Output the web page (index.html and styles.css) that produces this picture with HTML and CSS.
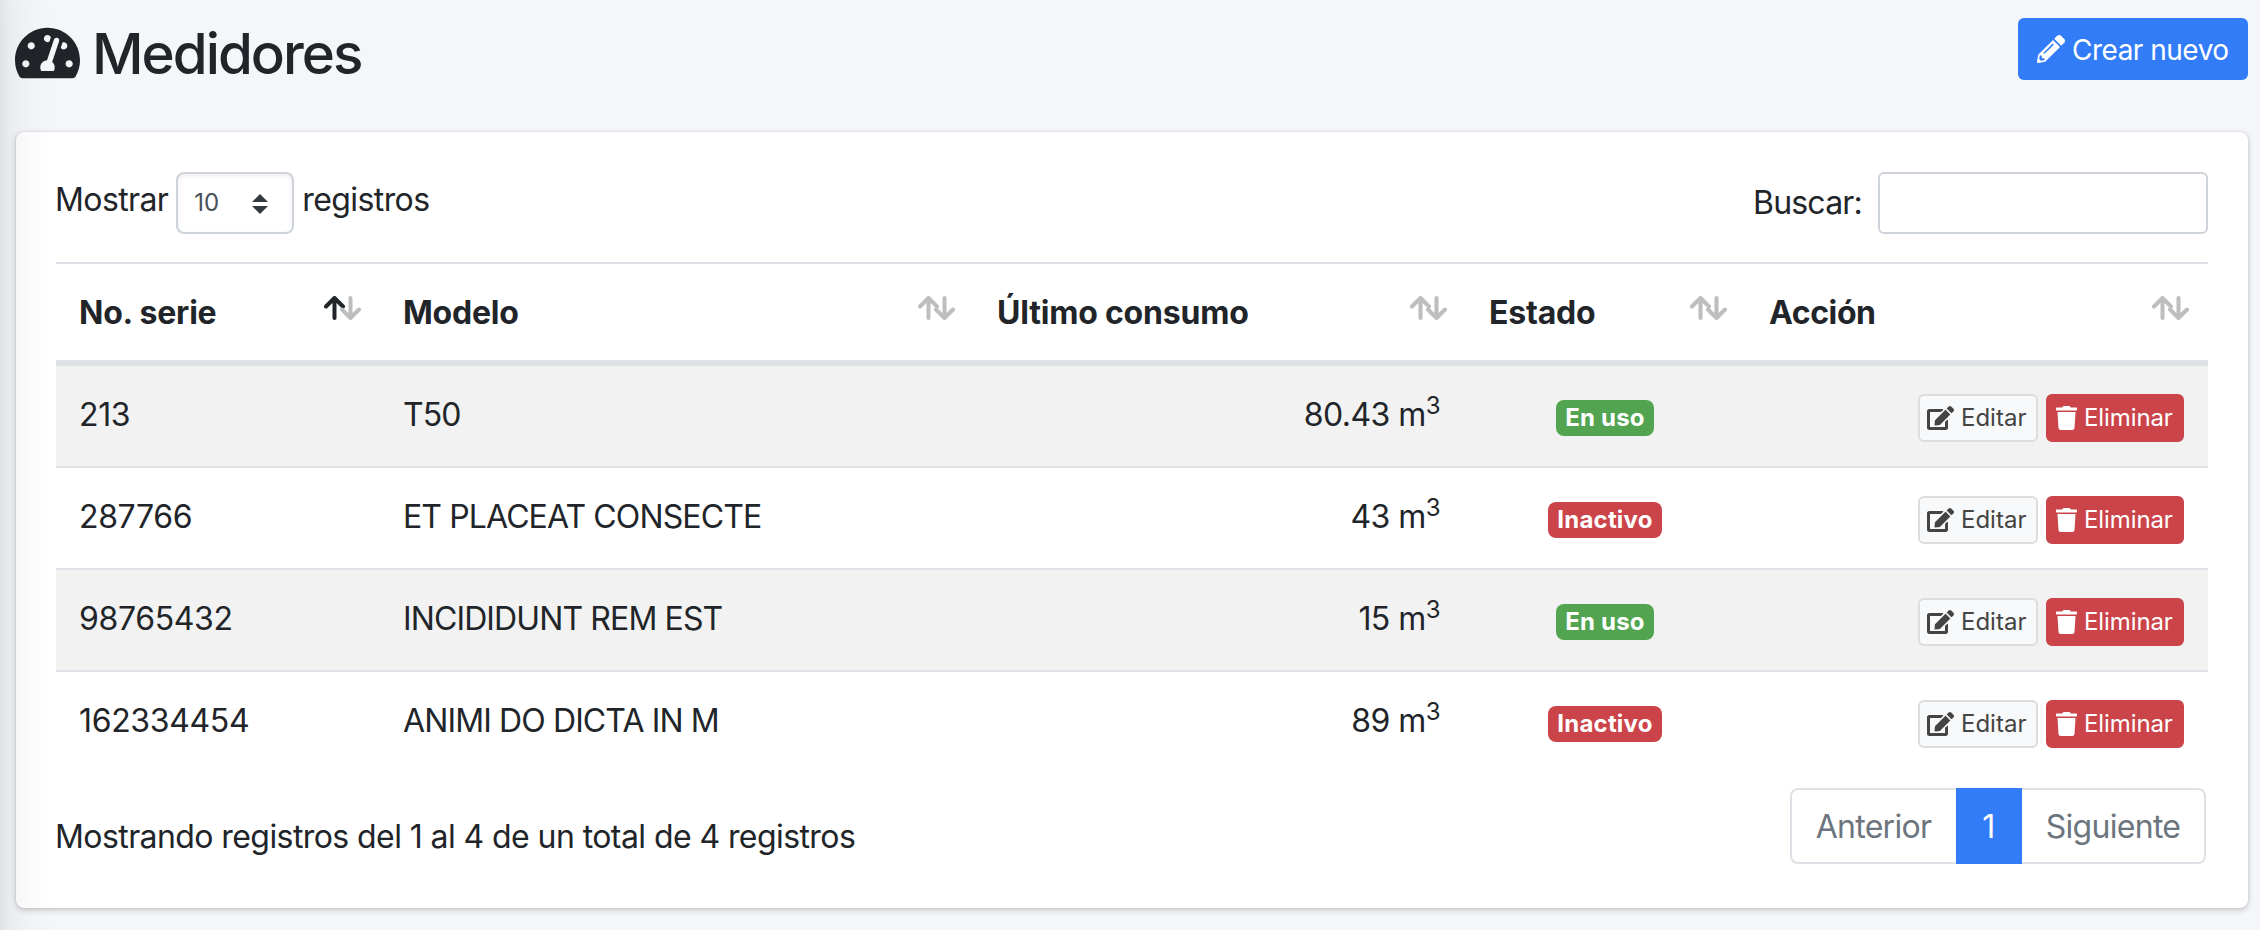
FILE: index.html
```html
<!DOCTYPE html>
<html lang="es">
<head>
<meta charset="utf-8">
<title>Medidores</title>
<link rel="stylesheet" href="styles.css">
</head>
<body>
<svg class="sprite" aria-hidden="true">
  <symbol id="i-gauge" viewBox="0 0 576 512"><path d="M288 32C128.94 32 0 160.94 0 320c0 52.8 14.25 102.26 39.06 144.8 5.61 9.62 16.3 15.2 27.44 15.2h443c11.14 0 21.83-5.58 27.44-15.2C561.75 422.26 576 372.8 576 320c0-159.06-128.94-288-288-288zm0 64c14.71 0 26.58 10.13 30.32 23.65-1.11 2.26-2.64 4.23-3.45 6.67l-9.22 27.67c-5.13 3.49-10.97 6.01-17.64 6.01-17.67 0-32-14.33-32-32S270.33 96 288 96zM96 384c-17.67 0-32-14.33-32-32s14.33-32 32-32 32 14.33 32 32-14.33 32-32 32zm48-160c-17.67 0-32-14.33-32-32s14.33-32 32-32 32 14.33 32 32-14.33 32-32 32zm246.77-72.41l-61.33 184C343.13 347.33 352 364.54 352 384c0 11.72-3.38 22.55-8.88 32H232.88c-5.5-9.45-8.88-20.28-8.88-32 0-33.94 26.5-61.43 59.9-63.59l61.34-184.01c4.17-12.56 17.73-19.45 30.36-15.17 12.57 4.19 19.35 17.79 15.17 30.36zm14.66 57.2l15.52-46.55c3.47-1.29 7.13-2.23 11.05-2.23 17.67 0 32 14.33 32 32s-14.33 32-32 32c-11.38-.01-20.89-6.28-26.57-15.22zM480 384c-17.67 0-32-14.33-32-32s14.33-32 32-32 32 14.33 32 32-14.33 32-32 32z"/></symbol>
  <symbol id="i-pencil" viewBox="0 0 512 512"><path d="M497.9 142.1l-46.1 46.1c-4.7 4.7-12.3 4.7-17 0l-111-111c-4.7-4.7-4.7-12.3 0-17l46.1-46.1c18.7-18.7 49.1-18.7 67.9 0l60.1 60.1c18.8 18.7 18.8 49.1 0 67.9zM284.2 99.8L21.6 362.4.4 483.9c-2.9 16.4 11.4 30.6 27.8 27.8l121.5-21.3 262.6-262.6c4.7-4.7 4.7-12.3 0-17l-111-111c-4.8-4.7-12.4-4.7-17.1 0zM124.1 339.9c-5.5-5.5-5.5-14.3 0-19.8l154-154c5.5-5.5 14.3-5.5 19.8 0s5.5 14.3 0 19.8l-154 154c-5.5 5.5-14.3 5.5-19.8 0zM88 424h48v36.3l-64.5 11.3-31.1-31.1L51.7 376H88v48z"/></symbol>
  <symbol id="i-edit" viewBox="0 0 576 512"><path d="M402.6 83.2l90.2 90.2c3.8 3.8 3.8 10 0 13.8L274.4 405.6l-92.8 10.3c-12.4 1.4-22.9-9.1-21.5-21.5l10.3-92.8L388.8 83.2c3.8-3.8 10-3.8 13.8 0zm162-22.9l-48.8-48.8c-15.2-15.2-39.9-15.2-55.2 0l-35.4 35.4c-3.8 3.8-3.8 10 0 13.8l90.2 90.2c3.8 3.8 10 3.8 13.8 0l35.4-35.4c15.2-15.3 15.2-40 0-55.2zM384 346.2V448H64V128h229.8c3.2 0 6.2-1.3 8.5-3.5l40-40c7.6-7.6 2.2-20.5-8.5-20.5H48C21.5 64 0 85.5 0 112v352c0 26.5 21.5 48 48 48h352c26.5 0 48-21.5 48-48V306.2c0-10.7-12.9-16-20.5-8.5l-40 40c-2.2 2.3-3.5 5.3-3.5 8.5z"/></symbol>
  <symbol id="i-trash" viewBox="0 0 448 512"><path d="M432 32H312l-9.4-18.7A24 24 0 0 0 281.1 0H166.8a23.72 23.72 0 0 0-21.4 13.3L136 32H16A16 16 0 0 0 0 48v32a16 16 0 0 0 16 16h416a16 16 0 0 0 16-16V48a16 16 0 0 0-16-16zM53.2 467a48 48 0 0 0 47.9 45h245.8a48 48 0 0 0 47.9-45L416 128H32z"/></symbol>
  <symbol id="i-sort" viewBox="0 0 37 24">
    <path class="up" d="M2 10.5 10.5 2 19 10.5M10.5 2V22"/>
    <path class="down" d="M18 13.5 26.5 22 35 13.5M26.5 22V2"/>
  </symbol>
</svg>
<div class="sidebar"></div>

<header class="page-head">
  <h1 class="title"><svg class="title-icon"><use href="#i-gauge"/></svg><span>Medidores</span></h1>
  <button class="btn-new"><svg class="new-icon"><use href="#i-pencil"/></svg><span>Crear nuevo</span></button>
</header>

<main class="card">
  <div class="controls">
    <label class="length"><span>Mostrar</span>
      <span class="select">10<svg class="caret" viewBox="0 0 16 20"><path d="M0 8 8 0l8 8zM0 12h16l-8 8z"/></svg></span>
      <span>registros</span></label>
    <label class="search"><span>Buscar:</span><input class="search-input" type="text"></label>
  </div>

  <table class="grid">
    <colgroup><col class="c1"><col class="c2"><col class="c3"><col class="c4"><col class="c5"></colgroup>
    <thead>
      <tr>
        <th><div class="th"><span>No. serie</span><svg class="sort asc"><use href="#i-sort"/></svg></div></th>
        <th><div class="th"><span>Modelo</span><svg class="sort"><use href="#i-sort"/></svg></div></th>
        <th><div class="th"><span>Último consumo</span><svg class="sort"><use href="#i-sort"/></svg></div></th>
        <th><div class="th"><span>Estado</span><svg class="sort"><use href="#i-sort"/></svg></div></th>
        <th><div class="th"><span>Acción</span><svg class="sort"><use href="#i-sort"/></svg></div></th>
      </tr>
    </thead>
    <tbody>
      <tr>
        <td class="serial">213</td><td class="model">T50</td><td class="num">80.43 m<sup>3</sup></td>
        <td class="state"><span class="badge ok">En uso</span></td>
        <td><div class="actions"><button class="btn edit"><svg class="edit-icon"><use href="#i-edit"/></svg>Editar</button><button class="btn del"><svg class="del-icon"><use href="#i-trash"/></svg>Eliminar</button></div></td>
      </tr>
      <tr>
        <td class="serial">287766</td><td class="model">ET PLACEAT CONSECTE</td><td class="num">43 m<sup>3</sup></td>
        <td class="state"><span class="badge off">Inactivo</span></td>
        <td><div class="actions"><button class="btn edit"><svg class="edit-icon"><use href="#i-edit"/></svg>Editar</button><button class="btn del"><svg class="del-icon"><use href="#i-trash"/></svg>Eliminar</button></div></td>
      </tr>
      <tr>
        <td class="serial">98765432</td><td class="model">INCIDIDUNT REM EST</td><td class="num">15 m<sup>3</sup></td>
        <td class="state"><span class="badge ok">En uso</span></td>
        <td><div class="actions"><button class="btn edit"><svg class="edit-icon"><use href="#i-edit"/></svg>Editar</button><button class="btn del"><svg class="del-icon"><use href="#i-trash"/></svg>Eliminar</button></div></td>
      </tr>
      <tr>
        <td class="serial">162334454</td><td class="model">ANIMI DO DICTA IN M</td><td class="num">89 m<sup>3</sup></td>
        <td class="state"><span class="badge off">Inactivo</span></td>
        <td><div class="actions"><button class="btn edit"><svg class="edit-icon"><use href="#i-edit"/></svg>Editar</button><button class="btn del"><svg class="del-icon"><use href="#i-trash"/></svg>Eliminar</button></div></td>
      </tr>
    </tbody>
  </table>

  <footer class="foot">
    <span class="info">Mostrando registros del 1 al 4 de un total de 4 registros</span>
    <nav class="pager"><span class="page prev">Anterior</span><span class="page current">1</span><span class="page next">Siguiente</span></nav>
  </footer>
</main>
</body>
</html>
```
FILE: styles.css
```css
* { box-sizing: border-box; }
html, body { height: 100%; }
body {
  margin: 0;
  padding: 0 12px 0 16px;
  overflow: hidden;
  background: #f4f6f9;
  color: #212529;
  font: 400 32px/48px Inter, "Liberation Sans", sans-serif;
  letter-spacing: -0.5px;
}
button, input { font: inherit; color: inherit; letter-spacing: inherit; margin: 0; }
.sprite { position: absolute; width: 0; height: 0; }
svg { fill: currentColor; flex: none; }

/* Off-canvas side menu: only its shadow reaches the page */
.sidebar {
  position: fixed;
  z-index: 5;
  top: -60px;
  bottom: -60px;
  left: -506px;
  width: 500px;
  box-shadow: 0 28px 56px rgba(0,0,0,.14), 0 20px 20px rgba(0,0,0,.1);
  pointer-events: none;
}

.page-head { display: flex; justify-content: space-between; align-items: flex-start; height: 132px; padding-top: 18px; }
.title { display: flex; align-items: flex-start; margin: 0; font-size: 56.5px; line-height: 70px; font-weight: 550; letter-spacing: -2px; }
.title span { padding-top: 1px; }
.title-icon { width: 65px; height: 58px; margin: 6px 12px 0 -1px; }
.btn-new {
  display: flex; align-items: center; height: 62px; padding: 0 19px; width: 230px;
  border: 0; border-radius: 6px; background: #327cf7; color: #fff;
  font-size: 28px; letter-spacing: -0.5px; white-space: nowrap;
}
.btn-new span { padding-top: 2px; }
.new-icon { width: 28px; height: 28px; margin-right: 7px; }

.card {
  height: 776px; padding: 40px; border-radius: 8px; background: #fff;
  box-shadow: 0 0 2px rgba(0,0,0,.125), 0 2px 6px rgba(0,0,0,.2);
}
.controls { display: flex; justify-content: space-between; height: 90px; }
.length { display: flex; gap: 8px; align-items: flex-start; margin-left: -1px; line-height: 56px; letter-spacing: -0.6px; }
.select {
  display: flex; align-items: center; justify-content: space-between; width: 118px; height: 62px;
  padding: 0 24px 0 16px; border: 2px solid #ced4da; border-radius: 8px;
  box-shadow: inset 0 2px 4px rgba(0,0,0,.075); color: #495057; font-size: 24px; line-height: 60px; letter-spacing: 0;
}
.caret { width: 16px; height: 20px; margin-top: 2px; color: #343a40; }
.search { display: flex; align-items: center; gap: 16px; height: 62px; letter-spacing: -0.8px; }
.search-input { width: 330px; height: 62px; border: 2px solid #ced4da; border-radius: 6px; background: #fff; }

.grid { width: 2152px; table-layout: fixed; border-collapse: separate; border-spacing: 0; }
.c1 { width: 323px; } .c2 { width: 594px; } .c3 { width: 492px; } .c4 { width: 280px; } .c5 { width: 463px; }
th { padding: 25px 18px 23px 24px; border-top: 2px solid #dee2e6; border-bottom: 4px solid #dee2e6; text-align: left; font-weight: 700; letter-spacing: -0.2px; }
th:first-child { padding-left: 23px; }
th:last-child { padding-right: 19px; letter-spacing: -0.4px; }
.th { display: flex; justify-content: space-between; height: 48px; }
.sort { width: 37px; height: 24px; margin-top: 7px; fill: none; stroke: #bdbebf; stroke-width: 4; stroke-linecap: round; stroke-linejoin: round; }
.sort.asc { --up: #212529; }
.up { stroke: var(--up, #bdbebf); }
td { height: 102px; padding: 25px 24px 23px; border-top: 2px solid #dee2e6; vertical-align: top; white-space: nowrap; }
tbody tr:nth-child(odd) { background: #f2f2f2; }
.serial { padding-left: 23px; letter-spacing: -0.35px; }
.model { letter-spacing: -0.88px; }
.num { padding-right: 25px; text-align: right; letter-spacing: -0.55px; }
sup { position: relative; top: -12px; font-size: 24px; line-height: 0; vertical-align: baseline; }
.state { text-align: center; }
.badge { display: inline-block; height: 36px; margin-top: 9px; padding: 0 9px; border-radius: 8px; color: #fff; font-size: 24px; line-height: 36px; font-weight: 700; letter-spacing: 0.2px; vertical-align: top; }
.ok { background: #53a451; }
.off { background: #cb444a; }
.actions { display: flex; justify-content: flex-end; gap: 8px; padding-top: 3px; }
.btn { display: flex; align-items: center; height: 48px; border: 2px solid; border-radius: 6px; font-size: 24px; line-height: 44px; letter-spacing: 0; }
.edit { width: 120px; padding: 0 7px; border-color: #ddd; background: #f8f9fa; color: #444; }
.del { width: 138px; padding: 0 8px; border-color: #cb444a; background: #cb444a; color: #fff; letter-spacing: -0.1px; }
.edit-icon { width: 27px; height: 24px; margin-right: 7px; }
.del-icon { width: 21px; height: 24px; margin-right: 7px; }

.foot { display: flex; justify-content: space-between; padding: 16px 2px 0 0; }
.info { margin-left: -1px; padding-top: 25px; letter-spacing: -0.58px; }
.pager { display: flex; height: 76px; color: #6c757d; line-height: 74px; text-align: center; letter-spacing: -0.7px; }
.page { border: 2px solid #dee2e6; }
.prev { width: 166px; padding-right: 1px; border-right: 0; border-radius: 8px 0 0 8px; }
.current { width: 66px; padding-right: 1px; border-color: #327cf7; background: #327cf7; color: #fff; }
.next { width: 184px; border-left: 0; border-radius: 0 8px 8px 0; }
```
